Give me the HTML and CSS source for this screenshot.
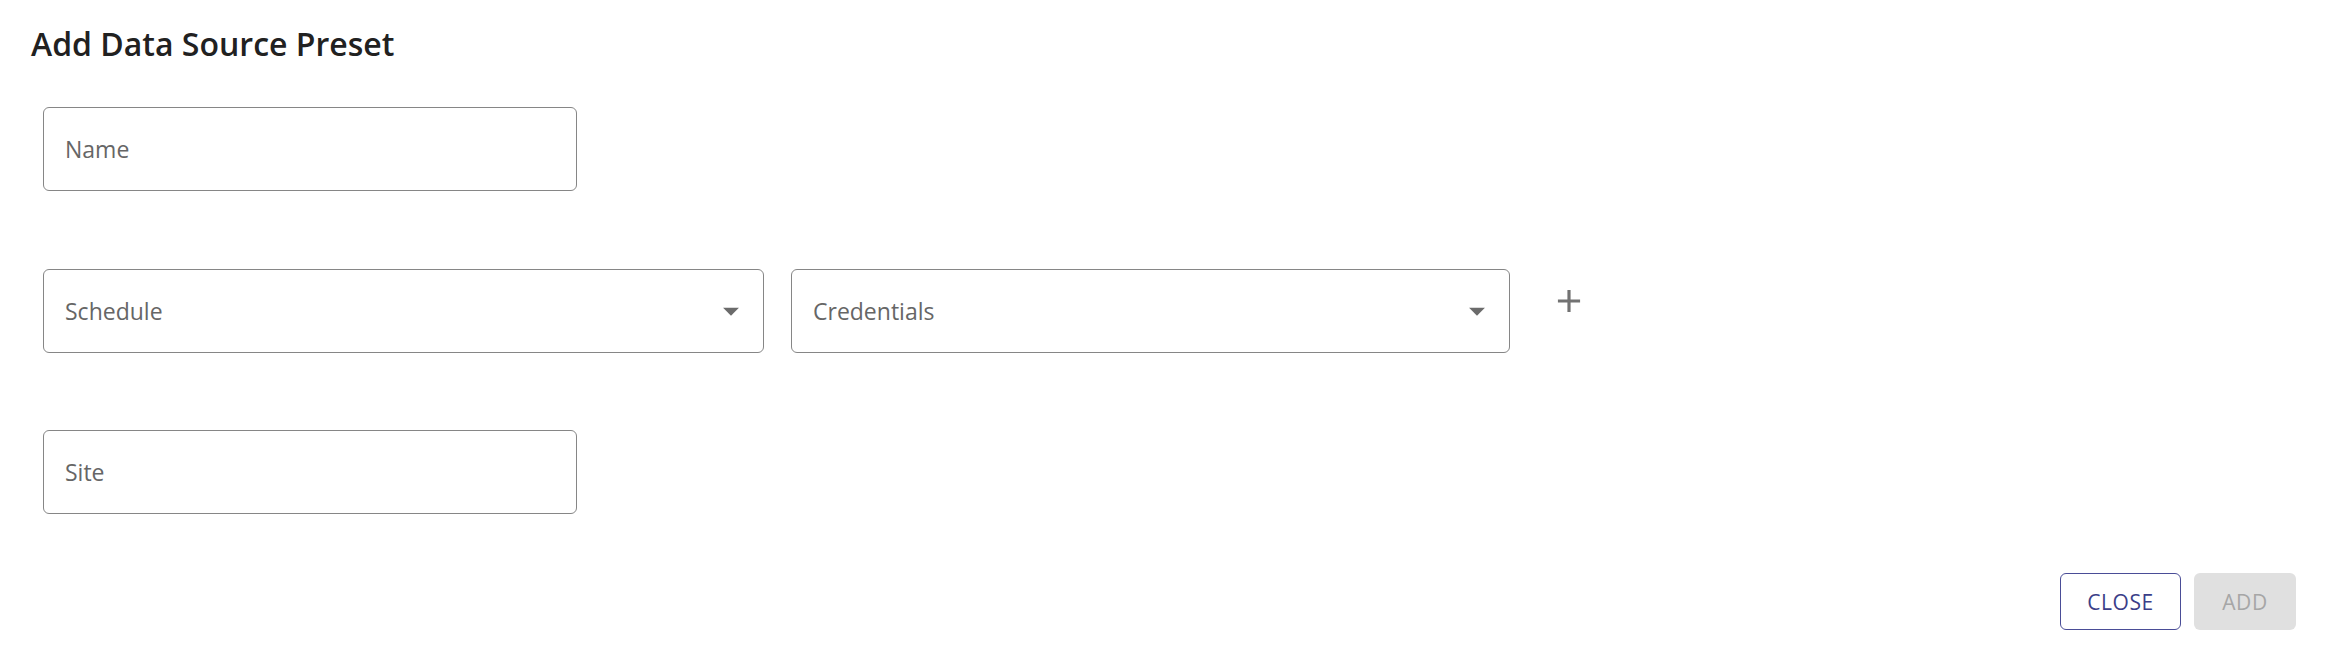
FILE: index.html
```html
<!DOCTYPE html>
<html lang="en">
<head>
    <meta charset="UTF-8">
    <meta name="viewport" content="width=device-width, initial-scale=1.0">
    <title>Add Data Source Preset</title>
    <link rel="stylesheet" href="styles.css">
</head>
<body>

    <div class="dialog">
        <h2 class="dialog-title">Add Data Source Preset</h2>

        <div class="dialog-content">
            <div class="field-row">
                <div class="field field-short">
                    <span class="field-label">Name</span>
                </div>
            </div>

            <div class="field-row">
                <div class="field field-select">
                    <span class="field-label">Schedule</span>
                    <svg class="dropdown-arrow" viewBox="0 0 24 24"><path d="M7 10l5 5 5-5z"/></svg>
                </div>
                <div class="field field-select">
                    <span class="field-label">Credentials</span>
                    <svg class="dropdown-arrow" viewBox="0 0 24 24"><path d="M7 10l5 5 5-5z"/></svg>
                </div>
                <button class="icon-button" title="Add credentials">
                    <svg viewBox="0 0 24 24"><path d="M19 13h-6v6h-2v-6H5v-2h6V5h2v6h6v2z"/></svg>
                </button>
            </div>

            <div class="field-row">
                <div class="field field-short">
                    <span class="field-label">Site</span>
                </div>
            </div>
        </div>

        <div class="dialog-actions">
            <button class="btn btn-outlined">Close</button>
            <button class="btn btn-disabled" disabled>Add</button>
        </div>
    </div>

</body>
</html>
```

FILE: styles.css
```css
body {
    margin: 0;
    padding: 0;
    background-color: #fff;
    font-family: "Open Sans", "Noto Sans", Arial, sans-serif;
    color: #222;
}

.dialog {
    padding: 21px 30px 28px 31px;
}

.dialog-title {
    margin: 0;
    font-size: 32px;
    font-weight: 600;
    line-height: 45px;
    color: #212121;
}

.dialog-content {
    margin-top: 41px;
    padding: 0 12px;
    display: flex;
    flex-direction: column;
    gap: 77.5px;
}

.field-row {
    display: flex;
    align-items: flex-start;
    gap: 27px;
}

.field {
    box-sizing: border-box;
    height: 84px;
    border: 1px solid #868686;
    border-radius: 6px;
    padding: 0 13px 0 21px;
    display: flex;
    align-items: center;
    justify-content: space-between;
}

.field-short {
    width: 534px;
}

.field-select {
    width: 721px;
}

.field-select + .field-select {
    width: 719px;
}

.field-label {
    font-size: 23px;
    color: #666;
}

.dropdown-arrow {
    width: 38px;
    height: 38px;
    fill: #6b6b6b;
}

.icon-button {
    margin: 4px 0 0 4px;
    width: 56px;
    height: 56px;
    padding: 9px;
    border: none;
    background: none;
    border-radius: 50%;
    cursor: pointer;
}

.icon-button svg {
    width: 38px;
    height: 38px;
    fill: #727272;
    display: block;
}

.dialog-actions {
    margin-top: 59px;
    display: flex;
    justify-content: flex-end;
    gap: 13px;
}

.btn {
    box-sizing: border-box;
    height: 57px;
    font-family: "Open Sans", "Noto Sans", Arial, sans-serif;
    font-size: 21px;
    letter-spacing: 0.6px;
    text-transform: uppercase;
    border-radius: 6px;
    cursor: pointer;
}

.btn-outlined {
    width: 121px;
    background-color: #fff;
    color: #3b3e88;
    border: 1px solid #4a4d97;
}

.btn-disabled {
    width: 102px;
    background-color: #e0e0e0;
    color: #a6a6a6;
    border: none;
    cursor: default;
}
```
